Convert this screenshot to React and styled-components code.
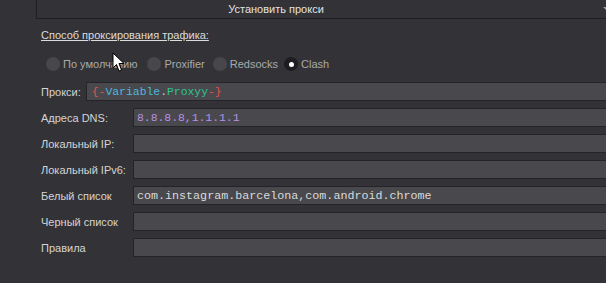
import React from "react";
import styled, { createGlobalStyle } from "styled-components";

const Global = createGlobalStyle`
  html, body { margin: 0; padding: 0; background: #333337; }
  body { overflow: hidden; width: 606px; height: 283px; }
  #root { width: 606px; height: 283px; overflow: hidden; position: relative; }
`;

const Page = styled.div`
  width: 660px;
  height: 283px;
  padding-left: 36px;
  box-sizing: border-box;
  font-family: "Liberation Sans", Arial, sans-serif;
  font-size: 11px;
  color: #d6d6d6;
  display: flex;
  flex-direction: column;
`;

const TopButton = styled.div`
  height: 18px;
  border-left: 1px solid #1f1f22;
  border-bottom: 1px solid #1f1f22;
  display: flex;
  align-items: center;
  position: relative;
  box-sizing: content-box;
`;

const TopLabel = styled.div`
  width: 478px;
  text-align: center;
  color: #e2e2e2;
`;

const Arrow = styled.div`
  position: absolute;
  left: 566px;
  top: 7px;
  width: 0;
  height: 0;
  border-left: 3px solid transparent;
  border-right: 3px solid transparent;
  border-top: 3px solid #9a9a9a;
`;

const Body = styled.div`
  padding-left: 5px;
  display: flex;
  flex-direction: column;
`;

const Heading = styled.div`
  margin-top: 9px;
  height: 14px;
  line-height: 14px;
  text-decoration: underline;
  color: #dcdcdc;
`;

const RadioRow = styled.div`
  margin-top: 14px;
  height: 16px;
  display: flex;
  align-items: center;
  gap: 8px;
  padding-left: 5px;
`;

const RadioItem = styled.label`
  display: flex;
  align-items: center;
  gap: 3px;
  color: #a9a9a9;
  white-space: nowrap;
  margin-right: ${(p) => p.$mr || 0}px;
`;

const Dot = styled.span`
  width: 14px;
  height: 14px;
  border-radius: 50%;
  background: ${(p) => (p.$checked ? "#1e1e22" : "#48484c")};
  display: flex;
  align-items: center;
  justify-content: center;
  &::after {
    content: "";
    width: 5px;
    height: 5px;
    border-radius: 50%;
    background: #ffffff;
    display: ${(p) => (p.$checked ? "block" : "none")};
  }
`;

const Fields = styled.div`
  margin-top: 10px;
  display: flex;
  flex-direction: column;
  gap: 7px;
`;

const FieldRow = styled.div`
  display: flex;
  align-items: center;
  height: 19px;
`;

const Label = styled.div`
  width: ${(p) => (p.$w ? p.$w + "px" : "auto")};
  padding-right: ${(p) => p.$pr || 0}px;
  flex-shrink: 0;
  white-space: nowrap;
  color: #d4d4d4;
`;

const Input = styled.div`
  flex: 1;
  height: 17px;
  background: #48484d;
  border: 1px solid #242428;
  display: flex;
  align-items: center;
  padding-left: ${(p) => p.$pl || 3}px;
  font-family: "Liberation Mono", "DejaVu Sans Mono", monospace;
  font-size: ${(p) => p.$fs || 11.4}px;
  color: ${(p) => p.$color || "#dadada"};
  white-space: pre;
`;

const Tok = styled.span`
  color: ${(p) => p.$c};
`;

const Cursor = styled.svg`
  position: absolute;
  left: 112px;
  top: 52px;
`;

export default function App() {
  return (
    <>
      <Global />
      <Page>
        <TopButton>
          <TopLabel>Установить прокси</TopLabel>
          <Arrow />
        </TopButton>
        <Body>
          <Heading>Способ проксирования трафика:</Heading>
          <RadioRow>
            <RadioItem $mr={2}><Dot />По умолчанию</RadioItem>
            <RadioItem><Dot />Proxifier</RadioItem>
            <RadioItem $mr={-2}><Dot />Redsocks</RadioItem>
            <RadioItem><Dot $checked />Clash</RadioItem>
          </RadioRow>
          <Fields>
            <FieldRow>
              <Label $pr={5}>Прокси:</Label>
              <Input $pl={5}>
                <Tok $c="#e2554c">{"{-"}</Tok>
                <Tok $c="#4fb6de">Variable</Tok>
                <Tok $c="#c8c8c8">.</Tok>
                <Tok $c="#2fc48e">Proxyy</Tok>
                <Tok $c="#e2554c">{"-}"}</Tok>
              </Input>
            </FieldRow>
            <FieldRow>
              <Label $w={92}>Адреса DNS:</Label>
              <Input $color="#b890e6">8.8.8.8,1.1.1.1</Input>
            </FieldRow>
            <FieldRow>
              <Label $w={92}>Локальный IP:</Label>
              <Input />
            </FieldRow>
            <FieldRow>
              <Label $w={92}>Локальный IPv6:</Label>
              <Input />
            </FieldRow>
            <FieldRow>
              <Label $w={92}>Белый список</Label>
              <Input $fs={11.7}>com.instagram.barcelona,com.android.chrome</Input>
            </FieldRow>
            <FieldRow>
              <Label $w={92}>Черный список</Label>
              <Input />
            </FieldRow>
            <FieldRow>
              <Label $w={92}>Правила</Label>
              <Input />
            </FieldRow>
          </Fields>
        </Body>
      </Page>
      <Cursor width="13" height="21" viewBox="0 0 13 21">
        <path d="M1 1 L1 16 L4.5 12.5 L7 19 L9.5 18 L7 11.5 L12 11.5 Z" fill="#ffffff" stroke="#000000" strokeWidth="1" strokeLinejoin="miter" />
      </Cursor>
    </>
  );
}
